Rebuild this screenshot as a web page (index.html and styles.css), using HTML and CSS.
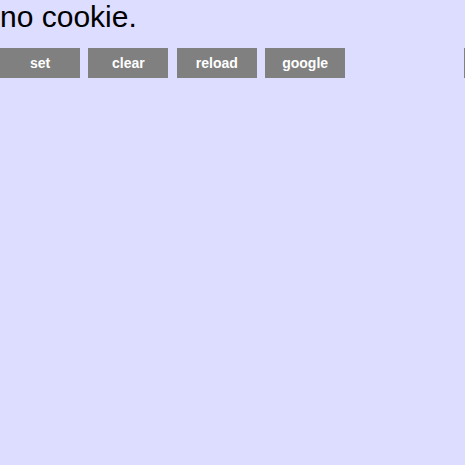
FILE: index.html
```html
<!DOCTYPE html>
<html>
<head>
<meta charset="utf-8">
<link rel="stylesheet" href="styles.css">
</head>
<body>
<div class="status">no cookie.</div>
<div class="toolbar">
  <button class="btn">set</button>
  <button class="btn">clear</button>
  <button class="btn">reload</button>
  <button class="btn">google</button>
  <button class="btn btn-far"></button>
</div>
</body>
</html>
```
FILE: styles.css
```css
html, body {
  margin: 0;
  padding: 0;
  background: #ddddff;
  overflow: hidden;
}
body {
  font-family: "Liberation Sans", Arial, sans-serif;
}
.status {
  font-size: 30px;
  color: #000;
  height: 48px;
}
.toolbar {
  display: flex;
  gap: 8.4px;
  width: 600px;
}
.btn {
  flex: 0 0 80px;
  width: 80px;
  height: 30px;
  border: 0;
  margin: 0;
  padding: 0;
  background: #808080;
  color: #fff;
  font-family: "Liberation Sans", Arial, sans-serif;
  font-weight: bold;
  font-size: 14px;
}
.btn-far {
  margin-left: 110px;
}
```
